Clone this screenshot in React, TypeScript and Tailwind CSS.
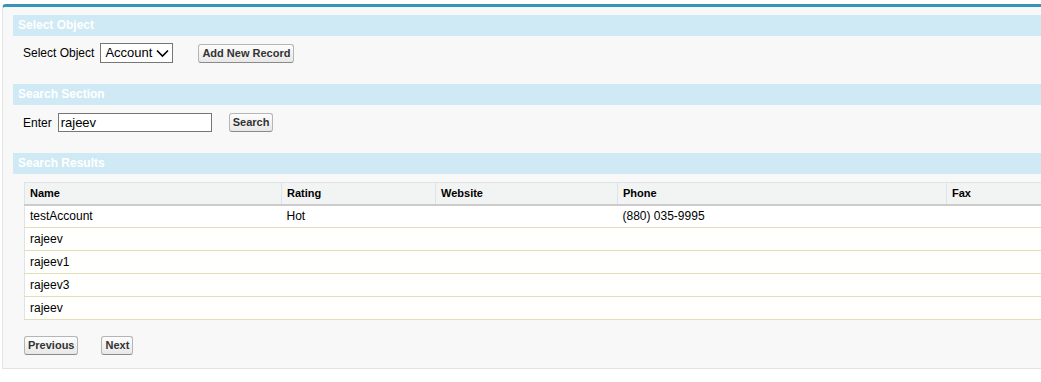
import React from "react";

const rows = [
  { name: "testAccount", rating: "Hot", website: "", phone: "(880) 035-9995", fax: "" },
  { name: "rajeev", rating: "", website: "", phone: "", fax: "" },
  { name: "rajeev1", rating: "", website: "", phone: "", fax: "" },
  { name: "rajeev3", rating: "", website: "", phone: "", fax: "" },
  { name: "rajeev", rating: "", website: "", phone: "", fax: "" },
];

function SectionHeader({ title }: { title: string }) {
  return (
    <div className="h-[21px] bg-[#cfeaf5] pl-[5px] text-[12px] font-bold leading-[21px] text-white">
      {title}
    </div>
  );
}

function Btn({ label, className = "" }: { label: string; className?: string }) {
  return (
    <button
      className={
        "h-[19px] rounded-[3px] border border-[#b5b5b5] border-b-[#8a8a8a] bg-gradient-to-b from-[#fdfdfd] to-[#e8e8e8] px-[3px] text-[11px] font-bold leading-[17px] text-[#333] " +
        className
      }
    >
      {label}
    </button>
  );
}

export default function App() {
  return (
    <div className="h-[382px] w-[1041px] overflow-hidden bg-white font-['Liberation_Sans',Arial,sans-serif] text-[#000]">
      <div className="ml-[2px] mt-[4px] w-[1100px] rounded-tl-[4px] border-l border-t-[3px] border-b border-l-[#e6e6e6] border-t-[#3596b5] border-b-[#e3e3e3] bg-[#f8f8f8] pb-[13px] pl-[10px] pt-[8px]">
        <SectionHeader title="Select Object" />

        <div className="mt-[7px] flex h-[20px] items-center pl-[10px] text-[12px]">
          <span className="mr-[6px]">Select Object</span>
          <div className="flex h-[20px] w-[73px] items-center border border-[#767676] bg-white pl-[4px] text-[13px]">
            <span>Account</span>
            <svg className="ml-[4px]" width="13" height="9" viewBox="0 0 13 9" fill="none">
              <path d="M1 1.5 L6.5 7 L12 1.5" stroke="#000" strokeWidth="1.6" />
            </svg>
          </div>
          <Btn label="Add New Record" className="ml-[25px]" />
        </div>

        <div className="mt-[21px]">
          <SectionHeader title="Search Section" />
        </div>

        <div className="mt-[8px] flex h-[19px] items-center pl-[10px] text-[12px]">
          <span className="mr-[6px]">Enter</span>
          <input
            defaultValue="rajeev"
            className="h-[19px] w-[154px] border border-[#767676] bg-white px-[2px] text-[13px] outline-none"
          />
          <Btn label="Search" className="ml-[17px]" />
        </div>

        <div className="mt-[21px]">
          <SectionHeader title="Search Results" />
        </div>

        <div className="ml-[11px] mt-[8px]">
          <table className="w-[1076px] table-fixed border-collapse border-l border-t border-[#e0e3e5] text-left">
            <colgroup>
              <col className="w-[257px]" />
              <col className="w-[154px]" />
              <col className="w-[182px]" />
              <col className="w-[329px]" />
              <col />
            </colgroup>
            <thead>
              <tr className="h-[22px] border-b-2 border-[#cccccc] bg-[#f2f3f3]">
                {["Name", "Rating", "Website", "Phone", "Fax"].map((h, i) => (
                  <th
                    key={h}
                    className={
                      "px-[5px] text-[11px] font-bold text-[#000] " +
                      (i > 0 ? "border-l border-[#e0e3e5]" : "")
                    }
                  >
                    {h}
                  </th>
                ))}
              </tr>
            </thead>
            <tbody>
              {rows.map((r, i) => (
                <tr
                  key={i}
                  className={
                    "h-[23px] border-b border-[#e3deb8] text-[12px] " +
                    (i === 0 ? "bg-white" : "bg-[#fffffd]")
                  }
                >
                  <td className="px-[5px]">{r.name}</td>
                  <td className="px-[5px]">{r.rating}</td>
                  <td className="px-[5px]">{r.website}</td>
                  <td className="px-[5px]">{r.phone}</td>
                  <td className="px-[5px]">{r.fax}</td>
                </tr>
              ))}
            </tbody>
          </table>
        </div>

        <div className="ml-[11px] mt-[16px] flex items-center">
          <Btn label="Previous" />
          <Btn label="Next" className="ml-[23px]" />
        </div>
      </div>
    </div>
  );
}
